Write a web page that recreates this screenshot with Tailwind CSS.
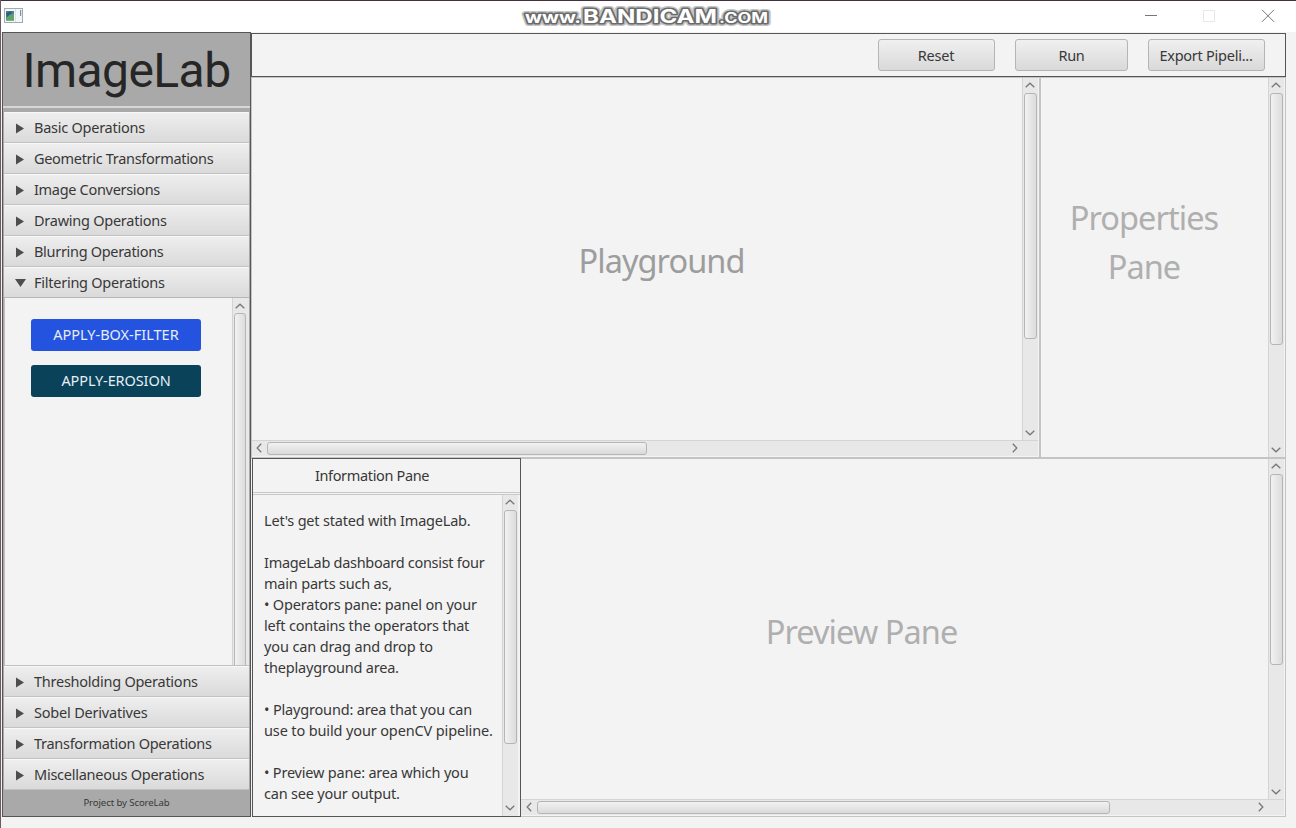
<!DOCTYPE html>
<html lang="en">
<head>
<meta charset="utf-8">
<title>ImageLab</title>
<script src="https://cdn.jsdelivr.net/npm/@tailwindcss/browser@4"></script>
</head>
<body class="w-[1296px] h-[828px] overflow-hidden bg-[#f3f3f3] font-['Noto_Sans','Open_Sans',sans-serif] text-[14.5px] tracking-[-0.25px] text-[#383838] border-l border-[#6b5a60]">
<svg class="hidden">
  <symbol id="up" viewBox="0 0 10 6"><path d="M.7 5.2 5 1.2l4.3 4" fill="none" stroke="#777" stroke-width="1.3"/></symbol>
  <symbol id="down" viewBox="0 0 10 6"><path d="M.7.8 5 4.8l4.3-4" fill="none" stroke="#777" stroke-width="1.3"/></symbol>
  <symbol id="left" viewBox="0 0 6 10"><path d="M5.2.7 1.2 5l4 4.3" fill="none" stroke="#777" stroke-width="1.3"/></symbol>
  <symbol id="right" viewBox="0 0 6 10"><path d="M.8.7 4.8 5l-4 4.3" fill="none" stroke="#777" stroke-width="1.3"/></symbol>
  <symbol id="tri" viewBox="0 0 8 10"><path d="M0 0v10l8-5z" fill="#4d4d4d"/></symbol>
</svg>

<header class="h-8 bg-white border-t border-[#44303c] flex items-center justify-between">
  <svg class="w-[19px] h-[15px] ml-[3px] -mt-[2px]" viewBox="0 0 19 15"><rect x=".5" y=".5" width="18" height="14" fill="#f4f7fa" stroke="#a3a9ad"/><rect x="2" y="3" width="8" height="9.500" fill="#4e8199"/><path d="M2 12.500V10l3-3 5-1v6.500z" fill="#5fa465"/><path d="M2 5l5-2 1 2-5 4z" fill="#315f83"/><path d="M11.500 1v13" stroke="#dde2e5"/><rect x="16" y="2" width="1.200" height="6" fill="#6c93ad"/></svg>
  <svg class="w-[256px] h-[28px] ml-[127px] -mt-px" viewBox="0 0 256 28">
    <g font-family="Inter, sans-serif" font-weight="700" fill="#fff" stroke-linejoin="round" paint-order="stroke" letter-spacing="0">
      <g stroke="#c4c4c4" stroke-width="6" fill="#c4c4c4" aria-hidden="true"><text x="6" y="21" font-size="16" textLength="56" lengthAdjust="spacingAndGlyphs">www.</text><text x="64" y="21" font-size="19" textLength="134" lengthAdjust="spacingAndGlyphs">BANDICAM</text><text x="200" y="21" font-size="14" textLength="49" lengthAdjust="spacingAndGlyphs">.COM</text></g>
      <g stroke="#6b6b6b" stroke-width="3"><text x="6" y="21" font-size="16" textLength="56" lengthAdjust="spacingAndGlyphs">www.</text><text x="64" y="21" font-size="19" textLength="134" lengthAdjust="spacingAndGlyphs">BANDICAM</text><text x="200" y="21" font-size="14" textLength="49" lengthAdjust="spacingAndGlyphs">.COM</text></g>
    </g>
  </svg>
  <svg class="w-[132px] h-[13px] mr-[21px] -mt-[2px]" viewBox="0 0 132 13" fill="none"><path d="M2 6.500h12" stroke="#777"/><rect x="60.500" y="1.500" width="11" height="11" stroke="#e8e8e8"/><path d="m119 .8 12 12m0-12-12 12" stroke="#777"/></svg>
</header>

<main class="flex h-[785px] pl-px">
  <aside class="w-[249px] shrink-0 h-[785px] bg-[#a9a9a9] border border-[#555] flex flex-col">
    <h1 class="h-[73px] shrink-0 pt-[2px] flex items-center justify-center font-['Roboto',sans-serif] text-[48px] leading-none tracking-[-0.55px] text-[#262626]"><span>ImageLab</span></h1>
    <div class="h-[2px] shrink-0 bg-[#d6d6d6]"></div>
    <div class="h-[4px] shrink-0"></div>
    <nav class="mx-px">
      <div class="h-[31px] pt-px flex items-center gap-[10px] pl-3 border-t border-t-[#f8f8f8] border-b border-b-[#c2c2c2] bg-linear-to-b from-[#eeeeee] to-[#dadada]"><svg class="w-2 h-[11px]"><use href="#tri"/></svg><span>Basic Operations</span></div>
      <div class="h-[31px] pt-px flex items-center gap-[10px] pl-3 border-t border-t-[#f8f8f8] border-b border-b-[#c2c2c2] bg-linear-to-b from-[#eeeeee] to-[#dadada]"><svg class="w-2 h-[11px]"><use href="#tri"/></svg><span class="tracking-[-0.31px]">Geometric Transformations</span></div>
      <div class="h-[31px] pt-px flex items-center gap-[10px] pl-3 border-t border-t-[#f8f8f8] border-b border-b-[#c2c2c2] bg-linear-to-b from-[#eeeeee] to-[#dadada]"><svg class="w-2 h-[11px]"><use href="#tri"/></svg><span class="tracking-[-0.31px]">Image Conversions</span></div>
      <div class="h-[31px] pt-px flex items-center gap-[10px] pl-3 border-t border-t-[#f8f8f8] border-b border-b-[#c2c2c2] bg-linear-to-b from-[#eeeeee] to-[#dadada]"><svg class="w-2 h-[11px]"><use href="#tri"/></svg><span>Drawing Operations</span></div>
      <div class="h-[31px] pt-px flex items-center gap-[10px] pl-3 border-t border-t-[#f8f8f8] border-b border-b-[#c2c2c2] bg-linear-to-b from-[#eeeeee] to-[#dadada]"><svg class="w-2 h-[11px]"><use href="#tri"/></svg><span class="tracking-[-0.31px]">Blurring Operations</span></div>
      <div class="h-[31px] pt-px flex items-center gap-2 pl-[11px] border-t border-t-[#f8f8f8] border-b border-b-[#b5b5b5] bg-linear-to-b from-[#eeeeee] to-[#dadada]"><svg class="w-[11px] h-2" viewBox="0 0 11 8"><path d="M0 0h11L5.500 8z" fill="#4d4d4d"/></svg><span>Filtering Operations</span></div>
      <section class="h-[368px] border-l border-b border-[#c0c0c0] bg-[#f3f3f3] flex justify-between overflow-hidden">
        <div class="pl-[26px] pt-[21px] flex flex-col gap-[14px] text-[#e6eef6]">
          <div class="w-[170px] h-8 rounded-[3px] bg-[#2453df] flex items-center justify-center tracking-[0px]"><span>APPLY-BOX-FILTER</span></div>
          <div class="w-[170px] h-8 rounded-[3px] bg-[#094259] flex items-center justify-center tracking-[-0.1px]"><span>APPLY-EROSION</span></div>
        </div>
        <div class="w-[17px] pr-[2px] h-[390px] bg-[#e8e8e8] border-l border-[#d4d4d4] flex flex-col items-center"><svg class="w-[10px] h-[6px] mt-[5px] mb-[4px] shrink-0"><use href="#up"/></svg><div class="w-[12px] grow rounded-[3px] border border-[#b5b5b5] bg-linear-to-r from-[#f2f2f2] to-[#dcdcdc]"></div></div>
      </section>
      <div class="h-[31px] pt-px flex items-center gap-[10px] pl-3 border-t border-t-[#f8f8f8] border-b border-b-[#c2c2c2] bg-linear-to-b from-[#eeeeee] to-[#dadada]"><svg class="w-2 h-[11px]"><use href="#tri"/></svg><span>Thresholding Operations</span></div>
      <div class="h-[31px] pt-px flex items-center gap-[10px] pl-3 border-t border-t-[#f8f8f8] border-b border-b-[#c2c2c2] bg-linear-to-b from-[#eeeeee] to-[#dadada]"><svg class="w-2 h-[11px]"><use href="#tri"/></svg><span class="tracking-[-0.2px]">Sobel Derivatives</span></div>
      <div class="h-[31px] pt-px flex items-center gap-[10px] pl-3 border-t border-t-[#f8f8f8] border-b border-b-[#c2c2c2] bg-linear-to-b from-[#eeeeee] to-[#dadada]"><svg class="w-2 h-[11px]"><use href="#tri"/></svg><span class="tracking-[-0.29px]">Transformation Operations</span></div>
      <div class="h-[31px] pt-px flex items-center gap-[10px] pl-3 border-t border-t-[#f8f8f8] border-b border-b-[#c2c2c2] bg-linear-to-b from-[#eeeeee] to-[#dadada]"><svg class="w-2 h-[11px]"><use href="#tri"/></svg><span>Miscellaneous Operations</span></div>
    </nav>
    <footer class="grow flex items-center justify-center text-[9.6px] tracking-[-0.1px]">Project by ScoreLab</footer>
  </aside>

  <div class="w-[1035px] pt-px flex flex-col">
    <div class="h-[44px] shrink-0 border border-[#555] flex items-center pl-[626px]">
      <div class="w-[117px] h-8 pt-[2px] rounded-[3px] border border-[#b5b5b5] bg-linear-to-b from-[#f0f0f0] to-[#d9d9d9] flex items-center justify-center"><span class="mr-px">Reset</span></div>
      <div class="w-[113px] h-8 pt-[2px] ml-5 rounded-[3px] border border-[#b5b5b5] bg-linear-to-b from-[#f0f0f0] to-[#d9d9d9] flex items-center justify-center"><span>Run</span></div>
      <div class="w-[117px] h-8 pt-[2px] ml-5 rounded-[3px] border border-[#b5b5b5] bg-linear-to-b from-[#f0f0f0] to-[#d9d9d9] flex items-center justify-center whitespace-nowrap"><span class="mr-px">Export Pipeli...</span></div>
    </div>

    <div class="h-[382px] shrink-0 flex border-t border-b-2 border-[#c4c4c4]">
      <section class="w-[788px] border-l border-[#c4c4c4] flex flex-col">
        <div class="h-[362px] flex">
          <div class="w-[770px] pl-[49px] flex items-center justify-center text-[32.5px] tracking-[-0.95px] text-[#9d9d9d]"><span class="mt-[4px]">Playground</span></div>
          <div class="w-[16px] pr-px bg-[#e8e8e8] border-l border-[#d4d4d4] flex flex-col items-center"><svg class="w-[10px] h-[6px] mt-[4px] mb-[5px] shrink-0"><use href="#up"/></svg><div class="w-[13px] h-[246px] rounded-[3px] border border-[#b5b5b5] bg-linear-to-r from-[#f2f2f2] to-[#dcdcdc]"></div><svg class="w-[10px] h-[6px] mt-auto mb-[4px]"><use href="#down"/></svg></div>
        </div>
        <div class="h-[16px] w-[786px] pb-px bg-[#e8e8e8] border-t border-[#d4d4d4] flex items-center"><svg class="w-[6px] h-[10px] ml-[4px] mr-[5px]"><use href="#left"/></svg><div class="h-[13px] w-[380px] rounded-[3px] border border-[#b5b5b5] bg-linear-to-b from-[#f2f2f2] to-[#dadada]"></div><svg class="w-[6px] h-[10px] ml-auto mr-[20px]"><use href="#right"/></svg></div>
      </section>
      <section class="w-[247px] border-l-2 border-r border-[#c4c4c4] flex">
        <div class="w-[227px] pr-[21px] text-center text-[32.5px] leading-[49px] tracking-[-0.95px] text-[#afafaf] pt-[115px]"><div>Properties</div><div>Pane</div></div>
        <div class="w-[16px] pr-px bg-[#e8e8e8] border-l border-[#d4d4d4] flex flex-col items-center"><svg class="w-[10px] h-[6px] mt-[4px] mb-[5px] shrink-0"><use href="#up"/></svg><div class="w-[13px] h-[252px] rounded-[3px] border border-[#b5b5b5] bg-linear-to-r from-[#f2f2f2] to-[#dcdcdc]"></div><svg class="w-[10px] h-[6px] mt-auto mb-[4px]"><use href="#down"/></svg></div>
      </section>
    </div>

    <div class="h-[359px] shrink-0 -mt-px flex relative">
      <section class="w-[269px] ml-px border border-[#555] bg-[#f3f3f3] flex flex-col">
        <h2 class="h-[34px] border-b border-[#c8c8c8] flex items-center justify-center pr-[29px] tracking-[-0.35px]"><span>Information Pane</span></h2>
        <div class="mt-px h-[322px] border-t border-[#c8c8c8] flex">
          <div class="w-[249px] pl-[11px] pt-[15px] leading-[21px] tracking-[-0.2px] whitespace-pre">Let's get stated with ImageLab.

<span class="tracking-[-0.29px]">ImageLab dashboard consist four</span>
main parts such as,
<span class="tracking-[-0.18px]">• Operators pane: panel on your</span>
left contains the operators that
<span class="tracking-[-0.13px]">you can drag and drop to</span>
theplayground area.

<span class="tracking-[-0.17px]">• Playground: area that you can</span>
<span class="tracking-[-0.13px]">use to build your openCV pipeline.</span>

• Preview pane: area which you
can see your output.</div>
          <div class="w-[16px] pr-px shrink-0 bg-[#e8e8e8] border-l border-[#d4d4d4] flex flex-col items-center"><svg class="w-[10px] h-[6px] mt-[4px] mb-[5px] shrink-0"><use href="#up"/></svg><div class="w-[13px] h-[234px] rounded-[3px] border border-[#b5b5b5] bg-linear-to-r from-[#f2f2f2] to-[#dcdcdc]"></div><svg class="w-[10px] h-[6px] mt-auto mb-[5px]"><use href="#down"/></svg></div>
        </div>
      </section>
      <section class="w-[765px] border-r border-b border-[#c4c4c4] pt-px flex flex-col">
        <div class="h-[340px] flex">
          <div class="w-[747px] pr-[66px] flex items-center justify-center text-[32.5px] tracking-[-0.95px] text-[#afafaf]"><span class="mt-[7px]">Preview Pane</span></div>
          <div class="w-[16px] pr-px bg-[#e8e8e8] border-l border-[#d4d4d4] flex flex-col items-center"><svg class="w-[10px] h-[6px] mt-[4px] mb-[5px] shrink-0"><use href="#up"/></svg><div class="w-[13px] h-[191px] rounded-[3px] border border-[#b5b5b5] bg-linear-to-r from-[#f2f2f2] to-[#dcdcdc]"></div><svg class="w-[10px] h-[6px] mt-auto mb-[4px]"><use href="#down"/></svg></div>
        </div>
        <div class="h-[16px] w-[763px] pb-px bg-[#e8e8e8] border-t border-[#d4d4d4] flex items-center"><svg class="w-[6px] h-[10px] ml-[5px] mr-[5px]"><use href="#left"/></svg><div class="h-[13px] w-[573px] rounded-[3px] border border-[#b5b5b5] bg-linear-to-b from-[#f2f2f2] to-[#dadada]"></div><svg class="w-[6px] h-[10px] ml-auto mr-[20px]"><use href="#right"/></svg></div>
      </section>
    </div>
  </div>
</main>
</body>
</html>
